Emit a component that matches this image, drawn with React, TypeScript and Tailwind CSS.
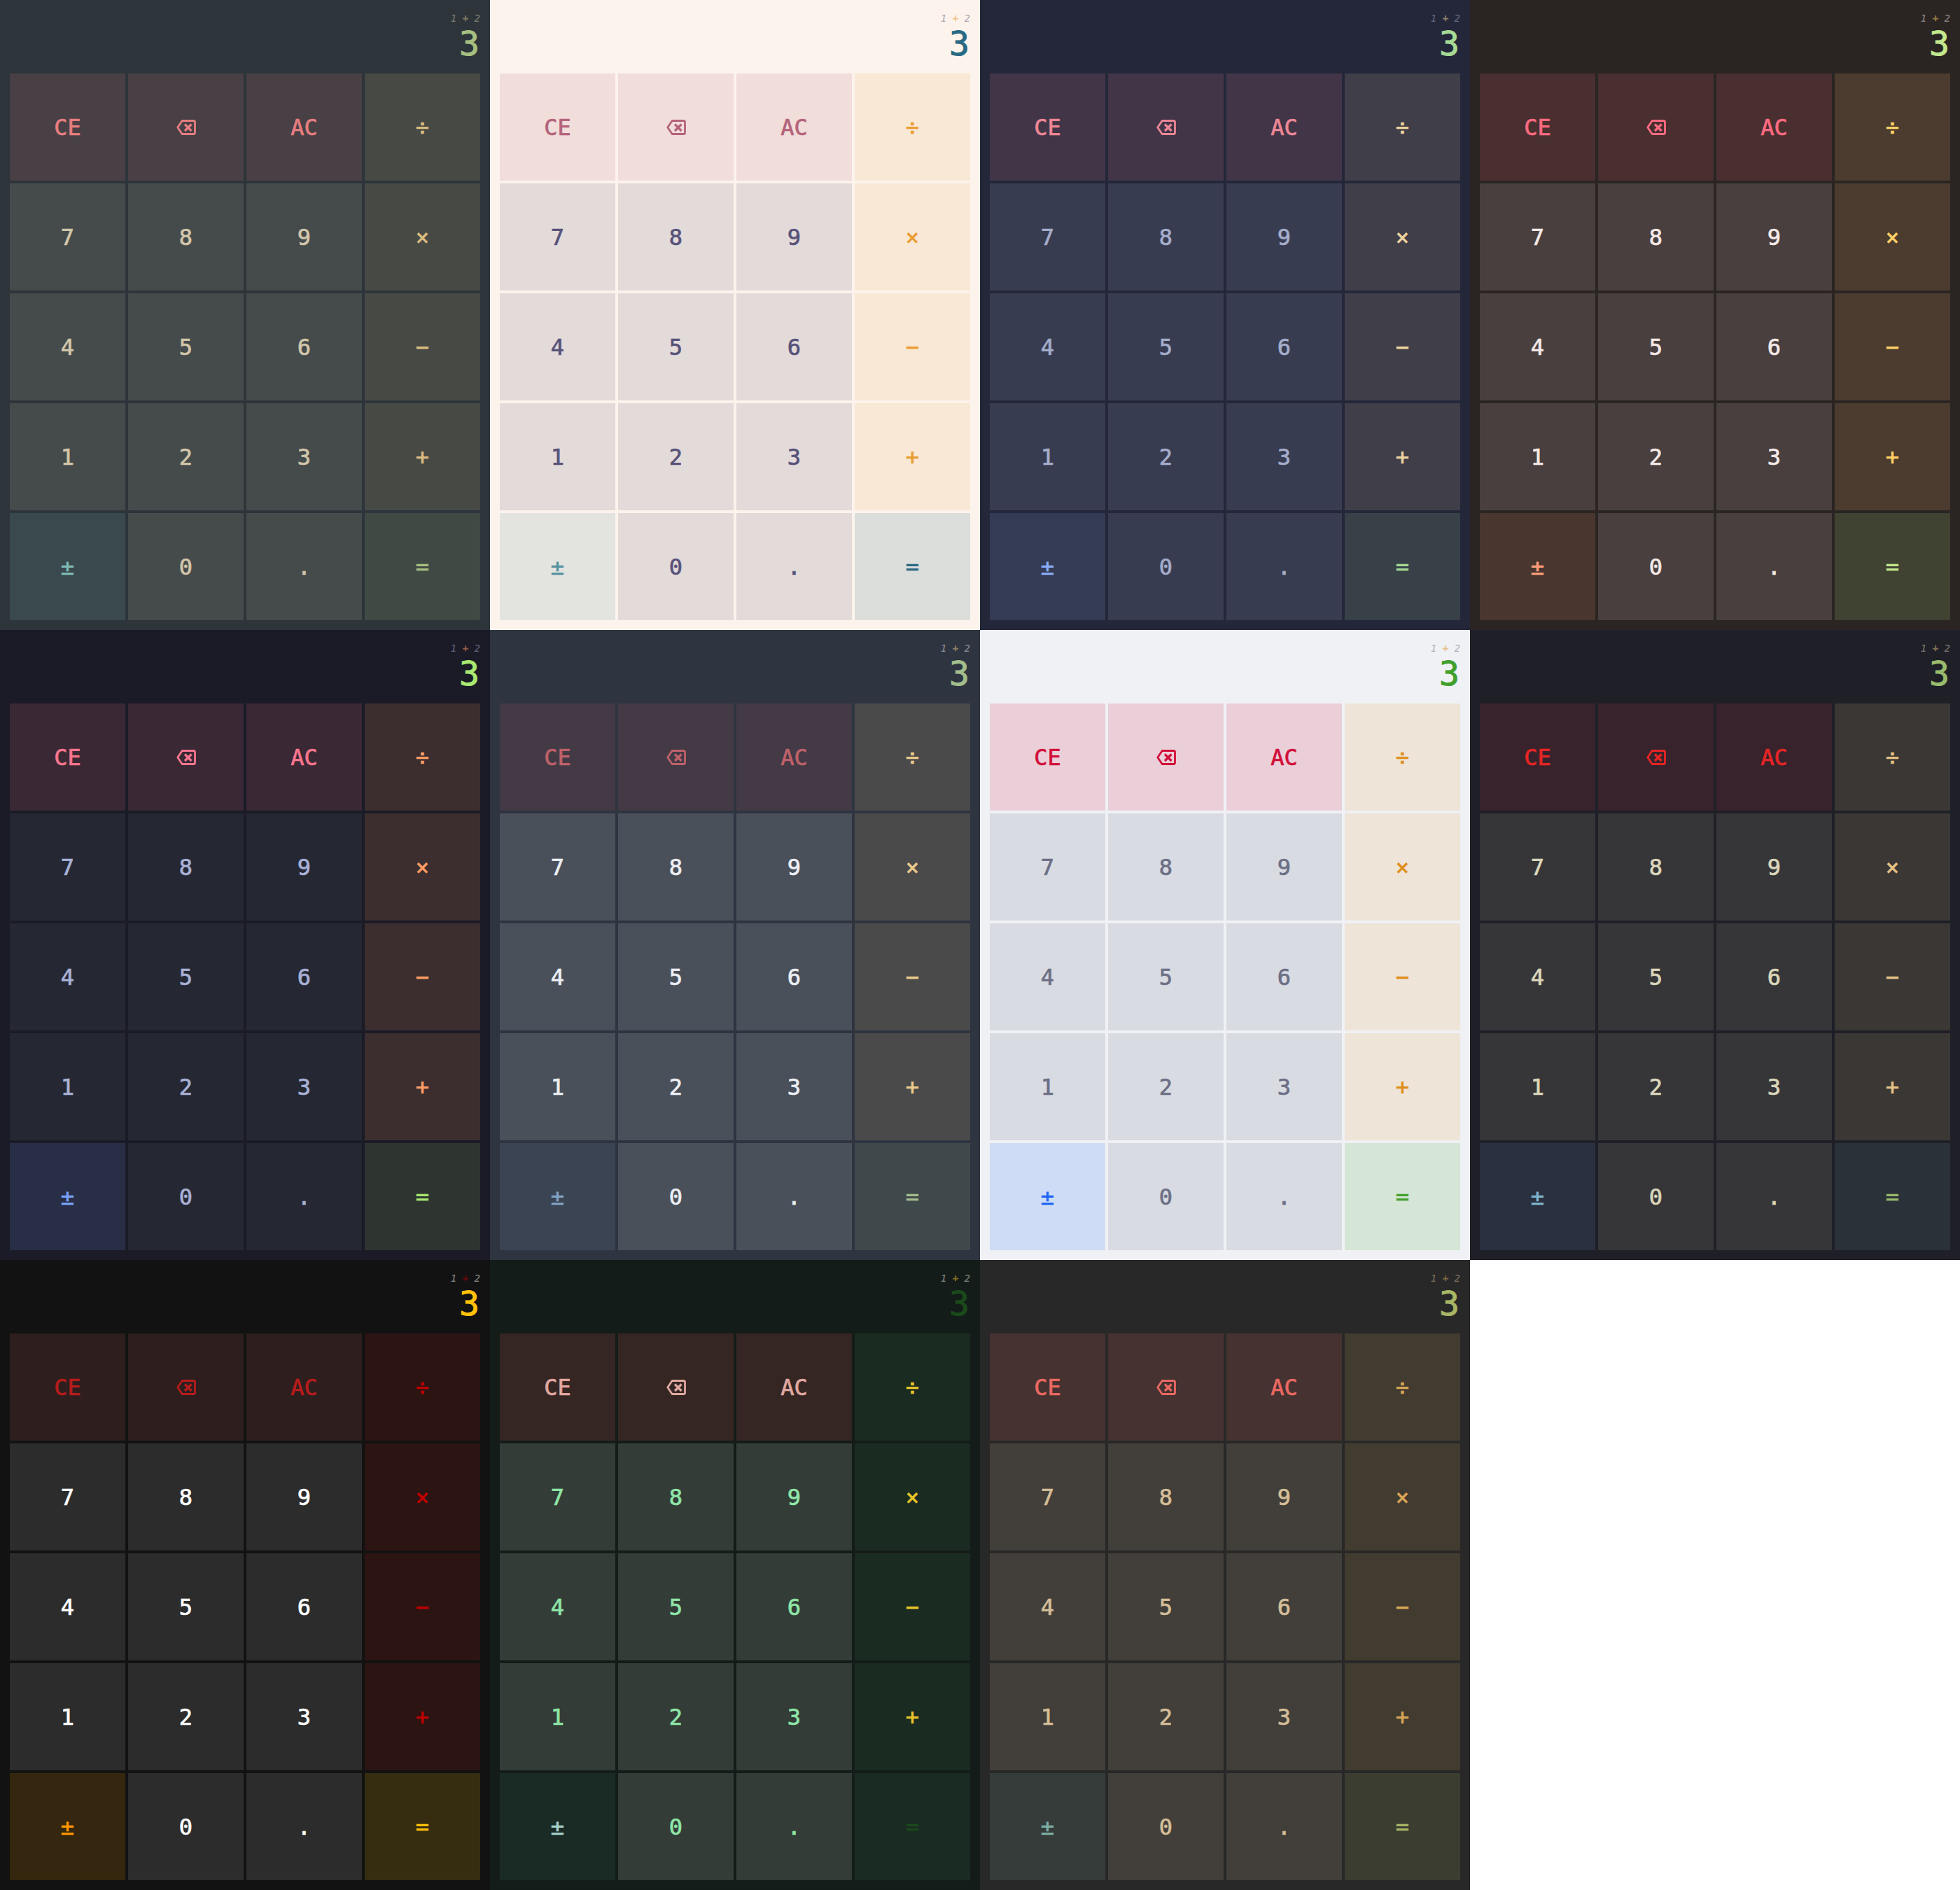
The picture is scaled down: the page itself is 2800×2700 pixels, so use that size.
type Theme = {
  bg: string;
  fn: string;
  op: string;
  num: string;
  sign: string;
  eq: string;
  result: string;
  exprNum: string;
  exprOp: string;
};

// Each key tint is the text colour at 15% unless the theme says otherwise
const themes: Theme[] = [
  {
    bg: "bg-[#2d353b]",
    fn: "bg-[#e67e80]/15 text-[#e67e80]",
    op: "bg-[#dbbc7f]/15 text-[#dbbc7f]",
    num: "bg-[#d3c6aa]/15 text-[#d3c6aa]",
    sign: "bg-[#7fbbb3]/15 text-[#7fbbb3]",
    eq: "bg-[#a7c080]/15 text-[#a7c080]",
    result: "text-[#a7c080]",
    exprNum: "text-[#d3c6aa]",
    exprOp: "text-[#dbbc7f]",
  },
  {
    bg: "bg-[#fcf3ec]",
    fn: "bg-[#b4637a]/15 text-[#b4637a]",
    op: "bg-[#f9e8d5] text-[#ea9d34]",
    num: "bg-[#575279]/15 text-[#575279]",
    sign: "bg-[#56949f]/15 text-[#56949f]",
    eq: "bg-[#286983]/15 text-[#286983]",
    result: "text-[#286983]",
    exprNum: "text-[#575279]",
    exprOp: "text-[#ea9d34]",
  },
  {
    bg: "bg-[#24273a]",
    fn: "bg-[#ed8796]/15 text-[#ed8796]",
    op: "bg-[#403e48] text-[#eed49f]",
    num: "bg-[#383c50] text-[#a5adcb]",
    sign: "bg-[#8aadf4]/15 text-[#8aadf4]",
    eq: "bg-[#a6da95]/15 text-[#a6da95]",
    result: "text-[#a6da95]",
    exprNum: "text-[#a5adcb]",
    exprOp: "text-[#eed49f]",
  },
  {
    bg: "bg-[#2a2523]",
    fn: "bg-[#ff6b81]/15 text-[#ff6b81]",
    op: "bg-[#4b3c2f] text-[#ffd166]",
    num: "bg-[#483f3e] text-[#f5e9e6]",
    sign: "bg-[#ff9e7a]/15 text-[#ff9e7a]",
    eq: "bg-[#c3e88d]/15 text-[#c3e88d]",
    result: "text-[#c3e88d]",
    exprNum: "text-[#f5e9e6]",
    exprOp: "text-[#ffd166]",
  },
  {
    bg: "bg-[#1a1b26]",
    fn: "bg-[#f7768e]/15 text-[#f7768e]",
    op: "bg-[#ff9e64]/15 text-[#ff9e64]",
    num: "bg-[#252833] text-[#a9b1d6]",
    sign: "bg-[#7aa2f7]/15 text-[#7aa2f7]",
    eq: "bg-[#9ece6a]/15 text-[#a9e871]",
    result: "text-[#a9e871]",
    exprNum: "text-[#a9b1d6]",
    exprOp: "text-[#ff9e64]",
  },
  {
    bg: "bg-[#2e3440]",
    fn: "bg-[#bf616a]/15 text-[#bf616a]",
    op: "bg-[#ebcb8b]/15 text-[#ebcb8b]",
    num: "bg-[#eceff4]/15 text-[#eceff4]",
    sign: "bg-[#81a1c1]/15 text-[#81a1c1]",
    eq: "bg-[#a3be8c]/15 text-[#a3be8c]",
    result: "text-[#a3be8c]",
    exprNum: "text-[#eceff4]",
    exprOp: "text-[#ebcb8b]",
  },
  {
    bg: "bg-[#eff1f5]",
    fn: "bg-[#d20f39]/15 text-[#d20f39]",
    op: "bg-[#efe4d8] text-[#df8e1d]",
    num: "bg-[#d8dbe2] text-[#6c6f85]",
    sign: "bg-[#1e66f5]/15 text-[#1e66f5]",
    eq: "bg-[#40a02b]/15 text-[#40a02b]",
    result: "text-[#40a02b]",
    exprNum: "text-[#6c6f85]",
    exprOp: "text-[#df8e1d]",
  },
  {
    bg: "bg-[#1f1f28]",
    fn: "bg-[#38232c] text-[#e82424]",
    op: "bg-[#3a3735] text-[#e6c384]",
    num: "bg-[#363639] text-[#dcd7ba]",
    sign: "bg-[#2a3040] text-[#7fb4ca]",
    eq: "bg-[#2b3138] text-[#98bb6c]",
    result: "text-[#98bb6c]",
    exprNum: "text-[#dcd7ba]",
    exprOp: "text-[#e6c384]",
  },
  {
    bg: "bg-[#121212]",
    fn: "bg-[#2e1e1e] text-[#b71c1c]",
    op: "bg-[#2c1413] text-[#c00000]",
    num: "bg-[#2c2c2c] text-white",
    sign: "bg-[#ff9800]/15 text-[#ff9800]",
    eq: "bg-[#ffc107]/15 text-[#ffc107]",
    result: "text-[#ffc107]",
    exprNum: "text-white",
    exprOp: "text-[#c00000]",
  },
  {
    bg: "bg-[#141c19]",
    fn: "bg-[#352623] text-[#e0a8a0]",
    op: "bg-[#1a2b21] text-[#e8c52a]",
    num: "bg-[#333c36] text-[#8fe6a8]",
    sign: "bg-[#1a2b26] text-[#a5d0c8]",
    eq: "bg-[#1a2b24] text-[#1a4a1a]",
    result: "text-[#1a4a1a]",
    exprNum: "text-[#f0f5e8]",
    exprOp: "text-[#e8c52a]",
  },
  {
    bg: "bg-[#282828]",
    fn: "bg-[#ea6962]/15 text-[#ea6962]",
    op: "bg-[#d8a657]/15 text-[#d8a657]",
    num: "bg-[#d4be98]/15 text-[#d4be98]",
    sign: "bg-[#7daea3]/15 text-[#7daea3]",
    eq: "bg-[#a9b665]/15 text-[#a9b665]",
    result: "text-[#a9b665]",
    exprNum: "text-[#d4be98]",
    exprOp: "text-[#d8a657]",
  },
];

type KeyKind = "fn" | "op" | "num" | "sign" | "eq";

const keys: { label: string; kind: KeyKind }[] = [
  { label: "CE", kind: "fn" },
  { label: "back", kind: "fn" },
  { label: "AC", kind: "fn" },
  { label: "÷", kind: "op" },
  { label: "7", kind: "num" },
  { label: "8", kind: "num" },
  { label: "9", kind: "num" },
  { label: "×", kind: "op" },
  { label: "4", kind: "num" },
  { label: "5", kind: "num" },
  { label: "6", kind: "num" },
  { label: "−", kind: "op" },
  { label: "1", kind: "num" },
  { label: "2", kind: "num" },
  { label: "3", kind: "num" },
  { label: "+", kind: "op" },
  { label: "±", kind: "sign" },
  { label: "0", kind: "num" },
  { label: ".", kind: "num" },
  { label: "=", kind: "eq" },
];

function BackspaceIcon() {
  return (
    <svg width="28" height="22" viewBox="0 0 28 22" fill="none" stroke="currentColor">
      <path
        d="M8.2 1.5H25a1.5 1.5 0 0 1 1.5 1.5v16a1.5 1.5 0 0 1-1.5 1.5H8.2L1.8 11z"
        strokeWidth="2.8"
        strokeLinejoin="round"
      />
      <path d="M12 6.5l9.5 9.5M21.5 6.5L12 16" strokeWidth="3.2" />
    </svg>
  );
}

function Calculator({ theme }: { theme: Theme }) {
  return (
    <div className={`flex flex-col h-[900px] ${theme.bg}`}>
      {/* Pantalla */}
      <div className="flex flex-col items-end h-[105px] pt-4 px-[14px]">
        <div className="text-sm italic opacity-50 whitespace-pre">
          <span className={theme.exprNum}>1 </span>
          <span className={`[-webkit-text-stroke:0.5px] ${theme.exprOp}`}>+</span>
          <span className={theme.exprNum}> 2</span>
        </div>
        <div className={`text-5xl mt-0.5 mr-px [-webkit-text-stroke:1px] ${theme.result}`}>3</div>
      </div>
      {/* Teclado */}
      <div className="flex-1 grid grid-cols-4 grid-rows-5 gap-1 px-[14px] pb-[14px]">
        {keys.map((key) => (
          <button
            key={key.label}
            className={`flex items-center justify-center text-[32px] [-webkit-text-stroke:0.7px] ${theme[key.kind]}`}
          >
            {key.label === "back" ? <BackspaceIcon /> : key.label}
          </button>
        ))}
      </div>
    </div>
  );
}

export default function App() {
  return (
    <main className="grid grid-cols-4 w-[2800px] h-[2700px] bg-white font-['DejaVu_Sans_Mono',monospace]">
      {themes.map((theme, i) => (
        <Calculator key={i} theme={theme} />
      ))}
    </main>
  );
}
